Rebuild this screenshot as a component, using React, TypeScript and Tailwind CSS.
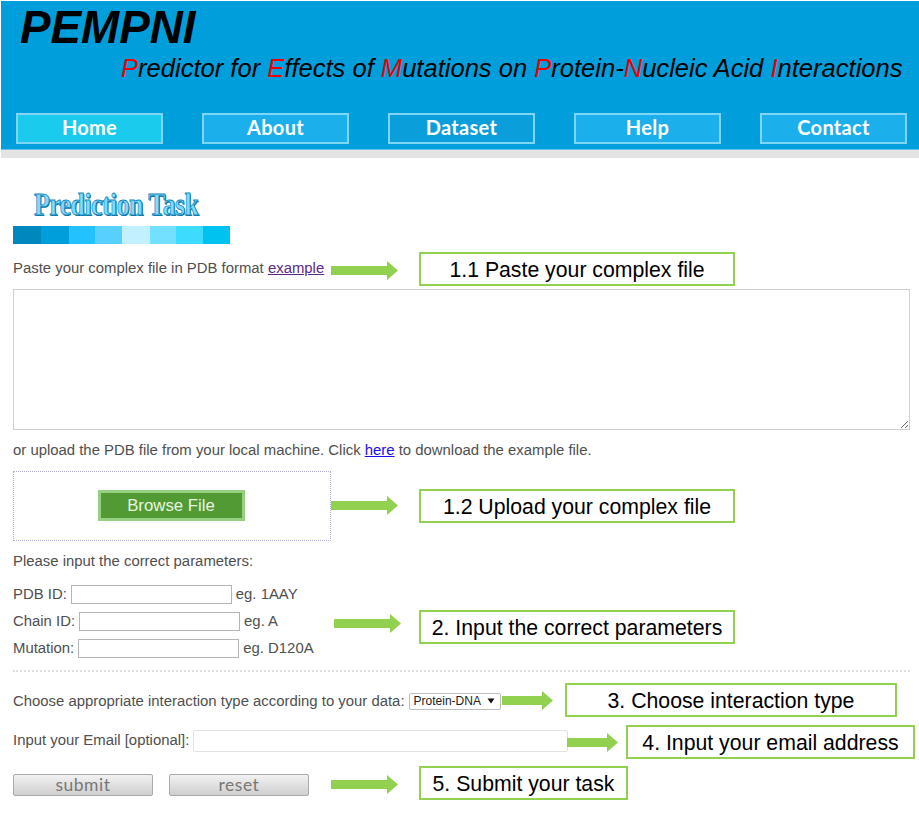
import React from "react";

const navItems = ["Home", "About", "Dataset", "Help", "Contact"];
const swatches: [string, number][] = [
  ["bg-[#0088bd]", 28],
  ["bg-[#009fdb]", 28],
  ["bg-[#22c1ff]", 26],
  ["bg-[#57cfff]", 27],
  ["bg-[#c2f0ff]", 28],
  ["bg-[#74e0ff]", 26],
  ["bg-[#3ddcff]", 27],
  ["bg-[#00c2f0]", 27],
];

function Arrow({ x, y, w }: { x: number; y: number; w: number }) {
  return (
    <svg className="absolute" style={{ left: x, top: y }} width={w} height={19} viewBox={`0 0 ${w} 19`}>
      <path d={`M0 5H${w - 11}V0L${w} 9.5L${w - 11} 19V14H0Z`} fill="#92d050" />
    </svg>
  );
}

function Note({ x, y, w, h, children }: { x: number; y: number; w: number; h: number; children: React.ReactNode }) {
  return (
    <div
      className="absolute flex items-center justify-center border-2 border-[#92d050] bg-white pt-[3px] text-[21.25px] text-black whitespace-nowrap"
      style={{ left: x, top: y, width: w, height: h }}
    >
      {children}
    </div>
  );
}

const R = ({ children }: { children: React.ReactNode }) => <span className="text-[#ee0000]">{children}</span>;

function Param({ label, hint }: { label: string; hint: string }) {
  return (
    <div className="flex h-[27px] items-center">
      <span>{label}</span>
      <input className="ml-[4px] h-[19px] w-[161px] border border-[#b5b5b5] bg-white" />
      <span className="ml-[4px]">{hint}</span>
    </div>
  );
}

function GreyButton({ label }: { label: string }) {
  return (
    <button className="flex h-[22px] w-[140px] items-center justify-center rounded-[2px] border border-[#aaaaaa] bg-gradient-to-b from-[#f2f2f2] to-[#cfcfcf] font-['Lato',sans-serif] text-[17.5px] leading-none tracking-[0.5px] text-[#777777]">
      {label}
    </button>
  );
}

export default function App() {
  return (
    <div className="relative h-[817px] w-[919px] overflow-hidden bg-white pl-px pt-px font-['Liberation_Sans',Arial,sans-serif] text-[14.9px] text-[#4f4f4f]">
      <header className="flex h-[148px] flex-col bg-[#009fdb]">
        <div className="pl-[19px] pt-[2px] text-[45.8px] font-bold italic leading-[50px] text-black">PEMPNI</div>
        <div className="mt-[1px] whitespace-nowrap pl-[120px] text-[25.56px] italic leading-[29px] text-black">
          <R>P</R>redictor for <R>E</R>ffects of <R>M</R>utations on <R>P</R>rotein-<R>N</R>ucleic Acid <R>I</R>nteractions
        </div>
        <nav className="mt-[30px] flex gap-[39px] pl-[15px]">
          {navItems.map((n, i) => (
            <a
              key={n}
              className={`flex h-[31px] w-[147px] items-center justify-center border-2 border-[#7dd6f5] pb-[3px] font-['Lato',sans-serif] text-[20px] font-bold tracking-[0.3px] text-white ${
                i === 0 ? "bg-[#1bcbee]" : i === 2 ? "bg-[#0a9fdb]" : "bg-[#1bb0ec]"
              }`}
            >
              {n}
            </a>
          ))}
        </nav>
      </header>
      <div className="h-[9px] border-t border-[#5cc3ec] bg-[#e3e3e3]" />

      <main className="pl-[12px] pr-[8px]">
        <div className="h-[68px] pl-[21px] pt-[29px]">
          <div className="origin-left scale-x-[0.83] whitespace-nowrap font-['Liberation_Serif',serif] text-[31px] font-bold leading-[36px] tracking-[-0.6px] text-[#7fdcff] [-webkit-text-stroke:0.8px_#1285b8] [text-shadow:1px_1px_0_#0a6f9e]">
            Prediction Task
          </div>
        </div>
        <div className="flex h-[18px] w-[217px]">
          {swatches.map(([c, w], i) => (
            <div key={i} className={c} style={{ width: w }} />
          ))}
        </div>

        <p className="mt-[16px] h-[16px] leading-[16px]">
          Paste your complex file in PDB format <a className="text-[#5b2a8c] underline">example</a>
        </p>
        <textarea className="mt-[13px] block h-[141px] w-[897px] border border-[#cfcfcf] bg-white" />
        <p className="mt-[12px] h-[16px] leading-[16px]">
          or upload the PDB file from your local machine. Click <a className="text-[#1a0dee] underline">here</a> to download the example file.
        </p>

        <div className="mt-[13px] flex h-[70px] w-[318px] items-center justify-center border border-dotted border-[#b0b0d8]">
          <button className="mb-[2px] mr-[2px] h-[31px] w-[147px] border-[3px] border-[#93d07f] bg-[#529a33] text-[16.8px] text-[#e8f5e0]">Browse File</button>
        </div>

        <p className="mt-[12px] h-[16px] leading-[16px]">Please input the correct parameters:</p>
        <div className="mt-[12px]">
          <Param label="PDB ID:" hint="eg. 1AAY" />
          <Param label="Chain ID:" hint="eg. A" />
          <Param label="Mutation:" hint="eg. D120A" />
        </div>

        <div className="mt-[8px] w-[897px] border-t-2 border-dotted border-[#e0e0e0]" />

        <div className="mt-[20px] flex h-[18px] items-center">
          <span>Choose appropriate interaction type according to your data:</span>
          <div className="ml-[4px] flex h-[17px] w-[92px] items-center justify-between rounded-[2px] border border-[#bdbdbd] pl-[4px] pr-[5px] text-[12px] text-[#222222]">
            <span>Protein-DNA</span>
            <svg width="8" height="6" viewBox="0 0 8 6">
              <path d="M0.5 0.5H7.5L4 5.5Z" fill="#111111" />
            </svg>
          </div>
        </div>

        <div className="mt-[20px] flex h-[22px] items-center">
          <span className="-mt-[1px]">Input your Email [optional]:</span>
          <input className="ml-[4px] h-[22px] w-[375px] rounded-[2px] border border-[#e2e2e2] bg-white" />
        </div>

        <div className="mt-[22px] flex gap-[16px]">
          <GreyButton label="submit" />
          <GreyButton label="reset" />
        </div>
      </main>

      <Arrow x={331} y={261} w={67} />
      <Note x={419} y={252} w={316} h={34}>1.1 Paste your complex file</Note>
      <Arrow x={331} y={496} w={67} />
      <Note x={419} y={489} w={316} h={34}>1.2 Upload your complex file</Note>
      <Arrow x={334} y={614} w={67} />
      <Note x={419} y={610} w={316} h={34}>2. Input the correct parameters</Note>
      <Arrow x={502} y={691} w={51} />
      <Note x={565} y={683} w={332} h={34}>3. Choose interaction type</Note>
      <Arrow x={567} y={733} w={51} />
      <Note x={626} y={725} w={289} h={34}>4. Input your email address</Note>
      <Arrow x={331} y={775} w={67} />
      <Note x={419} y={766} w={209} h={34}>5. Submit your task</Note>
    </div>
  );
}
